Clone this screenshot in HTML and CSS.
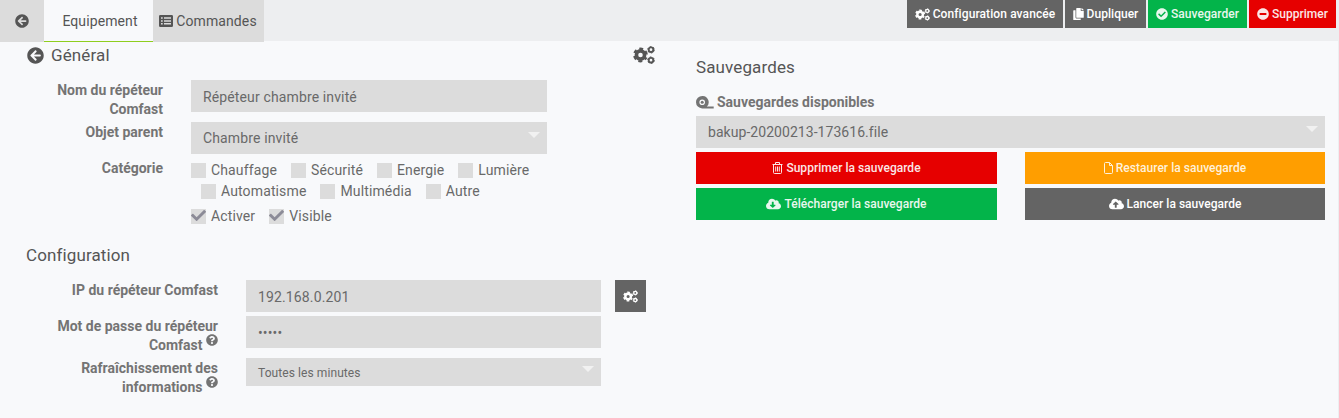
FILE: index.html
```
<!DOCTYPE html>
<html lang="fr">
<head>
<meta charset="utf-8">
<title>Répéteur Comfast</title>
<link rel="stylesheet" href="styles.css">
</head>
<body>
<svg class="sprite" aria-hidden="true">
  <symbol id="back" viewBox="0 0 512 512"><path d="M256 504C119 504 8 393 8 256S119 8 256 8s248 111 248 248-111 248-248 248zm28.9-143.6L209.4 288H392c13.300 0 24-10.700 24-24v-16c0-13.300-10.700-24-24-24H209.400l75.500-72.400c9.700-9.300 9.900-24.800.4-34.300l-11-10.900c-9.400-9.400-24.600-9.400-33.900 0L107.700 239c-9.400 9.400-9.400 24.600 0 33.900l132.700 132.700c9.400 9.400 24.600 9.400 33.900 0l11-10.900c9.500-9.500 9.300-25-.4-34.300z"/></symbol>
  <symbol id="list" viewBox="0 0 14 12"><path fill-rule="evenodd" d="M1.300 0h11.400A1.300 1.300 0 0 1 14 1.300v9.400a1.300 1.300 0 0 1-1.300 1.300H1.300A1.300 1.300 0 0 1 0 10.700V1.300A1.300 1.300 0 0 1 1.300 0zM2 2.300v1.500h1.700V2.300zm3 0v1.500h7V2.300zM2 5.200v1.500h1.700V5.200zm3 0v1.500h7V5.200zM2 8.100v1.500h1.700V8.100zm3 0v1.500h7V8.100z"/></symbol>
  <symbol id="cogs" viewBox="0 0 22 18"><g fill="none" stroke="currentColor"><circle cx="7.500" cy="9" r="4.100" stroke-width="3.600"/><circle cx="7.500" cy="9" r="6.300" stroke-width="2.200" stroke-dasharray="3.700 2.897" stroke-dashoffset="1.850" transform="rotate(30 7.500 9)"/><circle cx="18" cy="3.700" r="2.300" stroke-width="1.900"/><circle cx="18" cy="3.700" r="3.300" stroke-width="1" stroke-dasharray="1.780 1.676"/><circle cx="18" cy="14.200" r="2.300" stroke-width="1.900"/><circle cx="18" cy="14.200" r="3.300" stroke-width="1" stroke-dasharray="1.780 1.676"/></g></symbol>
  <symbol id="copy" viewBox="0 0 448 512"><path d="M320 448v40c0 13.255-10.745 24-24 24H24c-13.255 0-24-10.745-24-24V120c0-13.255 10.745-24 24-24h72v296c0 30.879 25.121 56 56 56h168zm0-344V0H152c-13.255 0-24 10.745-24 24v368c0 13.255 10.745 24 24 24h272c13.255 0 24-10.745 24-24V128H344c-13.200 0-24-10.800-24-24zm120.971-31.029L375.029 7.029A24 24 0 0 0 358.059 0H352v96h96v-6.059a24 24 0 0 0-7.029-16.970z"/></symbol>
  <symbol id="ok" viewBox="0 0 512 512"><path d="M504 256c0 136.967-111.033 248-248 248S8 392.967 8 256 119.033 8 256 8s248 111.033 248 248zM227.314 387.314l184-184c6.248-6.248 6.248-16.379 0-22.627l-22.627-22.627c-6.248-6.249-16.379-6.249-22.628 0L216 308.118l-70.059-70.059c-6.248-6.248-16.379-6.248-22.628 0l-22.627 22.627c-6.248 6.248-6.248 16.379 0 22.627l104 104c6.249 6.249 16.379 6.249 22.628.001z"/></symbol>
  <symbol id="minus" viewBox="0 0 512 512"><path d="M256 8C119 8 8 119 8 256s111 248 248 248 248-111 248-248S393 8 256 8zM124 296c-6.600 0-12-5.400-12-12v-56c0-6.600 5.400-12 12-12h264c6.600 0 12 5.400 12 12v56c0 6.600-5.400 12-12 12H124z"/></symbol>
  <symbol id="check" viewBox="0 0 512 512"><path d="M173.898 439.404l-166.400-166.400c-9.997-9.997-9.997-26.206 0-36.204l36.203-36.204c9.997-9.998 26.207-9.998 36.204 0L192 312.690 432.095 72.596c9.997-9.997 26.207-9.997 36.204 0l36.203 36.204c9.997 9.997 9.997 26.206 0 36.204l-294.400 294.401c-9.998 9.997-26.207 9.997-36.204-.001z"/></symbol>
  <symbol id="help" viewBox="0 0 512 512"><path d="M504 256c0 136.997-111.043 248-248 248S8 392.997 8 256C8 119.083 119.043 8 256 8s248 111.083 248 248zM262.655 90c-54.497 0-89.255 22.957-116.549 63.758-3.536 5.286-2.353 12.415 2.715 16.258l34.699 26.310c5.205 3.947 12.621 3.008 16.665-2.122 17.864-22.658 30.113-35.797 57.303-35.797 20.429 0 45.698 13.148 45.698 32.958 0 14.976-12.363 22.667-32.534 33.976C247.128 238.528 216 254.941 216 296v4c0 6.627 5.373 12 12 12h56c6.627 0 12-5.373 12-12v-1.333c0-28.462 83.186-29.647 83.186-106.667 0-58.002-60.165-102-116.531-102zM256 338c-25.365 0-46 20.635-46 46 0 25.364 20.635 46 46 46s46-20.636 46-46c0-25.364-20.635-46-46-46z"/></symbol>
  <symbol id="down" viewBox="0 0 640 512"><path d="M537.600 226.600c4.100-10.700 6.400-22.400 6.400-34.600 0-53-43-96-96-96-19.700 0-38.100 6-53.300 16.200C367 64.200 315.300 32 256 32c-88.400 0-160 71.600-160 160 0 2.700.1 5.400.2 8.100C40.200 219.800 0 273.200 0 336c0 79.500 64.500 144 144 144h368c70.700 0 128-57.300 128-128 0-61.900-44-113.600-102.400-125.400zm-132.900 88.700L299.300 420.700c-6.200 6.200-16.400 6.200-22.600 0L171.300 315.300c-10.100-10.100-2.900-27.300 11.300-27.300H248V176c0-8.800 7.200-16 16-16h48c8.800 0 16 7.200 16 16v112h65.400c14.200 0 21.400 17.200 11.300 27.300z"/></symbol>
  <symbol id="up" viewBox="0 0 640 512"><path d="M537.600 226.600c4.100-10.700 6.400-22.400 6.400-34.600 0-53-43-96-96-96-19.700 0-38.100 6-53.300 16.200C367 64.200 315.300 32 256 32c-88.400 0-160 71.600-160 160 0 2.700.1 5.400.2 8.100C40.200 219.800 0 273.200 0 336c0 79.500 64.500 144 144 144h368c70.700 0 128-57.300 128-128 0-61.900-44-113.600-102.400-125.400zM393.400 288H328v112c0 8.800-7.200 16-16 16h-48c-8.800 0-16-7.200-16-16V288h-65.400c-14.300 0-21.400-17.200-11.300-27.300l105.400-105.400c6.200-6.200 16.400-6.200 22.600 0l105.400 105.400c10.100 10.100 2.900 27.300-11.300 27.300z"/></symbol>
  <symbol id="tape" viewBox="0 0 18 13"><path fill-rule="evenodd" d="M6.200 0a6.200 6.200 0 0 1 4.600 10.600H17.700v1.800H6.200a6.200 6.200 0 0 1 0-12.400zm0 3.400a2.800 2.800 0 1 0 0 5.600 2.800 2.800 0 0 0 0-5.600z"/><circle cx="6.200" cy="6.200" r="1.500"/></symbol>
  <symbol id="trash" viewBox="0 0 11 12"><path fill="none" stroke="currentColor" d="M.5 2.500h10M3.500 2.500v-2h4v2M1.500 2.500v8q0 1 1 1h6q1 0 1-1v-8M3.700 4.500v5M5.500 4.500v5M7.300 4.500v5"/></symbol>
  <symbol id="file" viewBox="0 0 9 12"><path fill="none" stroke="currentColor" d="M1.500.5H5.500l3 3v7q0 1-1 1h-6q-1 0-1-1v-9q0-1 1-1zM5.500.5v3h3"/></symbol>
</svg>

<header class="topbar">
  <nav class="tabs">
    <a class="tab tab-back"><svg class="i14"><use href="#back"/></svg></a>
    <a class="tab tab-active">Equipement</a>
    <a class="tab tab-list"><svg class="i-list"><use href="#list"/></svg><span>Commandes</span></a>
  </nav>
  <div class="actions">
    <a class="btn advanced"><svg class="i-cogs"><use href="#cogs"/></svg><span>Configuration avancée</span></a>
    <a class="btn duplicate"><svg class="i-copy"><use href="#copy"/></svg><span>Dupliquer</span></a>
    <a class="btn save green"><svg class="i12"><use href="#ok"/></svg><span>Sauvegarder</span></a>
    <a class="btn remove red"><svg class="i12"><use href="#minus"/></svg><span>Supprimer</span></a>
  </div>
</header>

<main class="content">
  <section class="left">
    <div class="legend general"><svg class="i17"><use href="#back"/></svg><span>Général</span><svg class="legend-cogs"><use href="#cogs"/></svg></div>
    <div class="row row-a"><div class="label">Nom du répéteur<br>Comfast</div><div class="field">Répéteur chambre invité</div></div>
    <div class="row row-b"><div class="label">Objet parent</div><div class="field select">Chambre invité</div></div>
    <div class="row row-c"><div class="label cat">Catégorie</div>
      <div class="checks">
        <div class="line"><span class="chk"><i class="box"></i>Chauffage</span><span class="chk"><i class="box"></i>Sécurité</span><span class="chk"><i class="box"></i>Energie</span><span class="chk"><i class="box"></i>Lumière</span></div>
        <div class="line indent"><span class="chk"><i class="box"></i>Automatisme</span><span class="chk"><i class="box"></i>Multimédia</span><span class="chk"><i class="box"></i>Autre</span></div>
        <div class="line state"><span class="chk"><i class="box"><svg><use href="#check"/></svg></i>Activer</span><span class="chk"><i class="box"><svg><use href="#check"/></svg></i>Visible</span></div>
      </div>
    </div>
    <div class="legend config">Configuration</div>
    <div class="wide">
      <div class="row row-ip"><div class="label">IP du répéteur Comfast</div><div class="field">192.168.0.201</div><a class="btn square"><svg class="i-cogs"><use href="#cogs"/></svg></a></div>
      <div class="row row-pw"><div class="label">Mot de passe du répéteur<br>Comfast <svg class="help"><use href="#help"/></svg></div><div class="field password">•••••</div></div>
      <div class="row row-rf"><div class="label">Rafraîchissement des<br>informations <svg class="help"><use href="#help"/></svg></div><div class="field select small">Toutes les minutes</div></div>
    </div>
  </section>
  <section class="right">
    <div class="legend">Sauvegardes</div>
    <div class="label available"><svg class="i-tape"><use href="#tape"/></svg><span>Sauvegardes disponibles</span></div>
    <div class="field select file-name">bakup-20200213-173616.file</div>
    <div class="grid">
      <a class="btn red"><svg class="i-trash"><use href="#trash"/></svg><span>Supprimer la sauvegarde</span></a>
      <a class="btn orange"><svg class="i-file"><use href="#file"/></svg><span>Restaurer la sauvegarde</span></a>
      <a class="btn green"><svg class="i-cloud"><use href="#down"/></svg><span>Télécharger la sauvegarde</span></a>
      <a class="btn"><svg class="i-cloud"><use href="#up"/></svg><span>Lancer la sauvegarde</span></a>
    </div>
  </section>
</main>
</body>
</html>
```
FILE: styles.css
```
* { box-sizing: border-box; }
body {
  margin: 0;
  height: 418px;
  overflow: hidden;
  background: #f8f9fb;
  color: #696969;
  font: 400 14px/20px Roboto, sans-serif;
  letter-spacing: 0.13px;
}
svg { flex: none; fill: currentColor; }
.sprite { display: none; }
span, a, .label, .legend { white-space: nowrap; }

.topbar { display: flex; justify-content: space-between; height: 41px; padding-right: 3px; background: #edeef0; }
.tabs { display: flex; color: #555; letter-spacing: 0.1px; }
.tab { display: flex; align-items: center; justify-content: center; height: 42px; background: #dcdcdc; }
.tab-back { width: 44px; }
.tab-active { width: 109px; padding-left: 3px; background: #f8f9fb; border-bottom: 1px solid #8fce1e; }
.tab-list { width: 111px; gap: 3px; padding-right: 1px; }
.i14 { width: 14px; height: 14px; }
.i-list { width: 14px; height: 12px; }
.i17 { width: 17px; height: 17px; }

.actions { display: flex; gap: 2px; height: 28px; }
.btn { display: flex; align-items: center; justify-content: center; gap: 3px; background: #646464; color: #fff; font-size: 12px; font-weight: 500; letter-spacing: 0.03px; }
.green { background: #03b44a; color: #e9f7ee; }
.red { background: #e60000; color: #fbe6e6; }
.orange { background: #ff9e00; color: #fff1da; }
.advanced { width: 156px; letter-spacing: 0.1px; }
.duplicate { width: 81px; }
.save { width: 99px; }
.remove { width: 87px; }
.i12 { width: 12px; height: 12px; }
.i-cogs { width: 15px; height: 13px; }
.i-copy { width: 11px; height: 12px; }

.content { display: flex; height: 377px; border-right: 1px solid #edeef0; }
.left { width: 670px; padding-left: 26px; }
.legend { font-size: 17px; line-height: 28px; height: 28px; color: #555; letter-spacing: 0.12px; }
.general { display: flex; align-items: center; gap: 7px; height: 28px; margin-bottom: 11px; padding-left: 1px; padding-right: 15px; }
.legend-cogs { width: 22px; height: 18px; margin-left: auto; }
.row { display: flex; align-items: flex-start; }
.label { width: 137px; color: #747474; font-weight: 700; font-size: 14px; line-height: 19px; text-align: right; letter-spacing: 0; }
.left .label { margin-right: 28px; padding-top: 1px; }
.field { position: relative; width: 356px; height: 32px; padding: 1px 12px 0; line-height: 32px; background: #dcdcdc; }
.select { padding-top: 0; }
.select::after { content: ""; position: absolute; right: 7px; top: 10px; border: 6px solid transparent; border-top-color: #f1f1f1; border-bottom: 0; }
.row-a, .row-b { height: 42px; }
.row-c { height: 77px; }
.left .cat { margin-top: -6px; }
.line { display: flex; gap: 14px; height: 21px; line-height: 21px; margin-top: -4px; margin-bottom: 4px; }
.indent { padding-left: 10px; }
.state { margin-top: 0; }
.chk { display: flex; align-items: center; gap: 5px; }
.box { display: block; width: 15px; height: 15px; background: #dcdcdc; color: #8c8b97; }
.box svg { display: block; width: 15px; height: 15px; margin-top: -1px; }
.config { margin-bottom: 11px; }
.wide .label { width: 192px; }
.wide .field { width: 355px; }
.row-ip { height: 36px; }
.row-pw { height: 42px; }
.square { width: 31px; height: 32px; margin-left: 14px; }
.help { width: 12px; height: 12px; vertical-align: 4.500px; margin-top: -5px; }
.wide .small { height: 28px; padding-top: 1px; line-height: 28px; font-size: 12px; letter-spacing: 0.08px; }
.wide .small::after { top: 8px; }
.file-name { letter-spacing: 0.05px; }

.right { width: 655px; padding: 12px 0 0 26px; }
.available { display: flex; align-items: center; gap: 3px; height: 19px; margin: 12px 0 4px; width: auto; }
.i-tape { width: 18px; height: 13px; }
.right .field { width: 629px; }
.grid { display: grid; grid-template-columns: 301px 300px; column-gap: 28px; row-gap: 4px; margin-top: 4px; }
.grid .btn { height: 32px; }
.i-trash { width: 11px; height: 12px; }
.i-file { width: 9px; height: 12px; }
.i-cloud { width: 15px; height: 12px; }
```
